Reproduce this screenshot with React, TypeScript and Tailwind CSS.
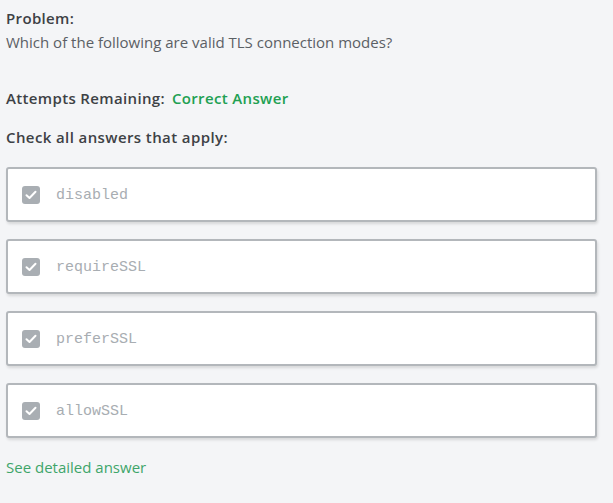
import React from "react";

const options = ["disabled", "requireSSL", "preferSSL", "allowSSL"];

function Check() {
  return (
    <div className="w-[18px] h-[18px] rounded-[3px] bg-[#a9aeb3] flex items-center justify-center shrink-0">
      <svg width="12" height="10" viewBox="0 0 12 10" fill="none">
        <path d="M1.5 5.2 L4.5 8 L10.5 1.8" stroke="#ffffff" strokeWidth="2" strokeLinecap="round" strokeLinejoin="round" />
      </svg>
    </div>
  );
}

export default function App() {
  return (
    <div className="w-[613px] h-[503px] bg-[#f4f5f7] overflow-hidden" style={{ fontFamily: "'Open Sans', sans-serif" }}>
      <div className="pl-[6px] pt-[8px]">
        <div className="text-[15px] font-semibold tracking-[0.35px] text-[#3d4145] leading-[20px]">Problem:</div>
        <div className="text-[15px] text-[#5b6065] leading-[20px] mt-[4px]">Which of the following are valid TLS connection modes?</div>
        <div className="flex items-center gap-[7px] mt-[36px] text-[15px] leading-[20px] tracking-[0.35px]">
          <span className="font-semibold text-[#3d4145]">Attempts Remaining:</span>
          <span className="font-semibold text-[#21a052]">Correct Answer</span>
        </div>
        <div className="text-[15px] font-semibold tracking-[0.4px] text-[#3d4145] leading-[20px] mt-[19px]">Check all answers that apply:</div>
        <div className="flex flex-col gap-[17px] mt-[20px] w-[591px]">
          {options.map((o) => (
            <div
              key={o}
              className="h-[55px] bg-white border-2 border-[#b3b7bb] rounded-[3px] shadow-[1px_2px_3px_rgba(0,0,0,0.12)] flex items-center pl-[14px] gap-[16px]"
            >
              <Check />
              <span className="text-[15px] text-[#a8adb2] mt-[3px]" style={{ fontFamily: "'Liberation Mono', monospace" }}>
                {o}
              </span>
            </div>
          ))}
        </div>
        <div className="mt-[19px] text-[15px] text-[#3ea56a] leading-[20px]">See detailed answer</div>
      </div>
    </div>
  );
}
